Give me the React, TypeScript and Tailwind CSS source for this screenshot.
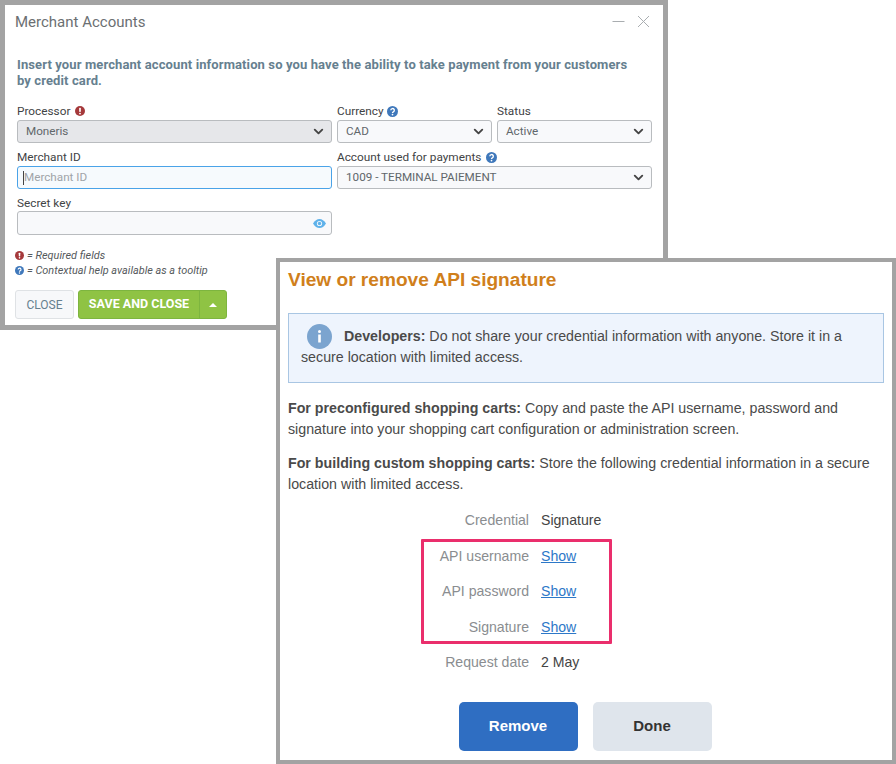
import { ChevronDown } from "lucide-react";

const labelClass = "flex items-center text-[11.8px] leading-[14px] text-[#3f4345] mb-[2px] whitespace-nowrap";
const selectClass =
	"flex h-[23px] items-center justify-between rounded-[3px] border border-[#b9bcbf] bg-[#f8f9fb] pl-[8px] pr-[5px] text-[11.7px] text-[#61676b]";
const bodyClass = "text-[14.23px] leading-[21px] text-[#4a4a4a]";

function RedMark({ size = 11, className = "" }: { size?: number; className?: string }) {
	return (
		<svg width={size} height={size} viewBox="0 0 12 12" className={`shrink-0 ${className}`}>
			<circle cx="6" cy="6" r="6" fill="#a5393b" />
			<rect x="5" y="2.2" width="2" height="5" rx="0.8" fill="#fff" />
			<circle cx="6" cy="9.1" r="1.1" fill="#fff" />
		</svg>
	);
}

function HelpMark({ size = 11, className = "" }: { size?: number; className?: string }) {
	return (
		<svg width={size} height={size} viewBox="0 0 12 12" className={`shrink-0 ${className}`}>
			<circle cx="6" cy="6" r="6" fill="#3f78bb" />
			<path d="M4.2 4.7a1.9 1.9 0 1 1 2.7 1.7c-.6.3-.9.6-.9 1.1" fill="none" stroke="#fff" strokeWidth="1.5" />
			<circle cx="6" cy="9.4" r="0.95" fill="#fff" />
		</svg>
	);
}

function Select({ value, className = "" }: { value: string; className?: string }) {
	return (
		<div className={`${selectClass} ${className}`}>
			<span>{value}</span>
			<ChevronDown size={15} strokeWidth={3} className="text-[#444]" />
		</div>
	);
}

function MerchantWindow() {
	return (
		<div className="absolute left-0 top-0 h-[330px] w-[668px] border-[5px] border-[#a3a3a3] bg-white font-['Roboto',sans-serif]">
			<div className="flex items-center justify-between pl-[10px] pr-[13px] pt-[7px]">
				<div className="text-[15px] leading-[20px] text-[#6b6f72]">Merchant Accounts</div>
				<div className="mb-[2px] flex items-center gap-[12px]">
					<svg width="13" height="13" viewBox="0 0 13 13">
						<path d="M0.5 6.5H12.5" stroke="#a9adb0" strokeWidth="1" />
					</svg>
					<svg width="13" height="13" viewBox="0 0 13 13">
						<path d="M1 1L12 12M12 1L1 12" stroke="#a9adb0" strokeWidth="1" />
					</svg>
				</div>
			</div>
			<div className="px-[12px] pt-[25px]">
				<p className="pr-[20px] text-[13px] font-bold leading-[16px] tracking-[0.11px] text-[#66808f]">
					Insert your merchant account information so you have the ability to take payment from your customers by
					credit card.
				</p>
				<div className="mt-[15px] grid grid-cols-[315px_155px_155px] gap-x-[5px] gap-y-[7px]">
					<div>
						<div className={labelClass}>
							Processor
							<RedMark size={10} className="ml-[5px]" />
						</div>
						<Select value="Moneris" className="!bg-[#e6e7ea]" />
					</div>
					<div>
						<div className={labelClass}>
							Currency
							<HelpMark className="ml-[3px]" />
						</div>
						<Select value="CAD" />
					</div>
					<div>
						<div className={labelClass}>Status</div>
						<Select value="Active" />
					</div>
					<div>
						<div className={labelClass}>Merchant ID</div>
						<div className="flex h-[23px] items-center rounded-[3px] border border-[#4aa3e8] bg-[#f6fafd] pl-[5px] text-[11.7px] text-[#a0a4a8]">
							<span className="h-[14px] w-px bg-[#444]" />
							Merchant ID
						</div>
					</div>
					<div className="col-span-2">
						<div className={labelClass}>
							Account used for payments
							<HelpMark className="ml-[5px]" />
						</div>
						<Select value="1009 - TERMINAL PAIEMENT" />
					</div>
					<div>
						<div className="mb-[1px] text-[11.8px] leading-[14px] text-[#3f4345]">Secret key</div>
						<div className="flex h-[24px] items-center justify-end rounded-[3px] border border-[#b9bcbf] bg-[#f8f9fb] pr-[5px]">
							<svg width="13" height="9" viewBox="0 0 13 9">
								<path d="M0 4.5C1.8 1.5 4 0 6.5 0S11.2 1.5 13 4.5C11.2 7.5 9 9 6.5 9S1.8 7.5 0 4.5Z" fill="#5fb2ea" />
								<circle cx="6.5" cy="4.5" r="2.6" fill="#f8f9fb" />
								<circle cx="6.5" cy="4.5" r="1.7" fill="#5fb2ea" />
							</svg>
						</div>
					</div>
				</div>
				<div className="mt-[13px] -ml-[2px] text-[10.9px] italic leading-[15px] text-[#55595c]">
					<div className="flex items-center gap-[3px]">
						<RedMark size={9} /> = Required fields
					</div>
					<div className="flex items-center gap-[3px]">
						<HelpMark size={9} /> = Contextual help available as a tooltip
					</div>
				</div>
				<div className="mt-[12px] -ml-[2px] flex gap-[4px]">
					<button className="h-[29px] w-[59px] rounded-[3px] border border-[#dfe2e5] bg-[#f7f8fa] text-[12px] text-[#66808f]">
						CLOSE
					</button>
					<div className="flex h-[29px] rounded-[3px] border border-[#7db53f] bg-[#8fc344] text-[12.5px] font-bold text-white">
						<span className="flex w-[121px] items-center justify-center border-r border-[#7db53f]">SAVE AND CLOSE</span>
						<span className="flex w-[26px] items-center justify-center">
							<svg width="8" height="4" viewBox="0 0 8 4">
								<path d="M0 4L4 0L8 4Z" fill="#fff" />
							</svg>
						</span>
					</div>
				</div>
			</div>
		</div>
	);
}

function CredentialRow({ label, value, link }: { label: string; value: string; link?: boolean }) {
	return (
		<div className="flex h-[35.5px] items-center text-[14.1px]">
			<div className="w-[253px] pr-[12px] text-right text-[#8a8d90]">{label}</div>
			<div className={link ? "text-[#2d78c8] underline" : "text-[#444]"}>{value}</div>
		</div>
	);
}

function SignatureWindow() {
	return (
		<div className="absolute left-[276px] top-[258px] h-[506px] w-[620px] border-[4px] border-[#a3a3a3] bg-white font-['Liberation_Sans',sans-serif]">
			<div className="px-[8px] pt-[7px]">
				<h2 className="text-[19.1px] font-bold leading-[22px] text-[#d07f1c]">View or remove API signature</h2>
				<div className={`mt-[22px] h-[70px] w-[596px] border border-[#a9c6e3] bg-[#eef4fd] pl-[12px] pt-[12px] ${bodyClass}`}>
					<div className="flex h-[21px] items-center">
						<svg width="25" height="25" viewBox="0 0 25 25" className="ml-[6px] mr-[12px] shrink-0">
							<circle cx="12.5" cy="12.5" r="12.5" fill="#7ba4cf" />
							<rect x="11.2" y="10.5" width="2.6" height="8" fill="#fff" />
							<circle cx="12.5" cy="7.5" r="1.5" fill="#fff" />
						</svg>
						<div>
							<b>Developers:</b> Do not share your credential information with anyone. Store it in a
						</div>
					</div>
					<div>secure location with limited access.</div>
				</div>
				<p className={`mt-[15px] ${bodyClass}`}>
					<b>For preconfigured shopping carts:</b> Copy and paste the API username, password and signature into your
					shopping cart configuration or administration screen.
				</p>
				<p className={`mt-[13px] ${bodyClass}`}>
					<b>For building custom shopping carts:</b> Store the following credential information in a secure location
					with limited access.
				</p>
				<div className="relative mt-[8px]">
					<CredentialRow label="Credential" value="Signature" />
					<CredentialRow label="API username" value="Show" link />
					<CredentialRow label="API password" value="Show" link />
					<CredentialRow label="Signature" value="Show" link />
					<CredentialRow label="Request date" value="2 May" />
					<div className="absolute left-[133px] top-[36px] h-[105px] w-[191px] rounded-[1px] border-[3px] border-[#ea2e6c]" />
				</div>
				<div className="mt-[21px] flex justify-center gap-[15px] pr-[2px]">
					<button className="h-[49px] w-[119px] rounded-[5px] bg-[#2f6ec2] text-[15px] font-bold text-white">Remove</button>
					<button className="h-[49px] w-[119px] rounded-[5px] bg-[#dfe5ec] text-[15px] font-bold text-[#333]">Done</button>
				</div>
			</div>
		</div>
	);
}

export default function App() {
	return (
		<div className="relative h-[764px] w-[896px] overflow-hidden bg-white">
			<MerchantWindow />
			<SignatureWindow />
		</div>
	);
}
